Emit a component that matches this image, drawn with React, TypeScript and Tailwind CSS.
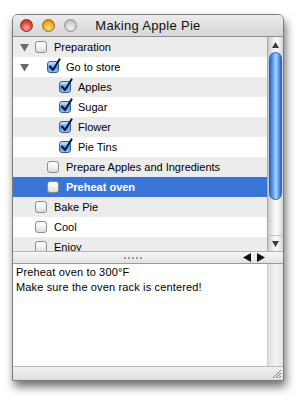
import React from 'react';

type Item = {
  label: string;
  level: number;
  checked?: boolean;
  open?: boolean;
  selected?: boolean;
};

const items: Item[] = [
  { label: 'Preparation', level: 0, open: true },
  { label: 'Go to store', level: 1, checked: true, open: true },
  { label: 'Apples', level: 2, checked: true },
  { label: 'Sugar', level: 2, checked: true },
  { label: 'Flower', level: 2, checked: true },
  { label: 'Pie Tins', level: 2, checked: true },
  { label: 'Prepare Apples and Ingredients', level: 1 },
  { label: 'Preheat oven', level: 1, selected: true },
  { label: 'Bake Pie', level: 0 },
  { label: 'Cool', level: 0 },
  { label: 'Enjoy', level: 0 },
];

const indent = ['pl-[22px]', 'pl-[34px]', 'pl-[46px]'];

function Checkbox({ checked }: { checked?: boolean }) {
  if (checked) {
    return (
      <span className="relative block w-[12px] h-[12px] shrink-0">
        <span className="absolute inset-0 rounded-[3px] border border-[#2f5ea8] bg-[linear-gradient(#cfe3fb,#5d9cec_55%,#8cc2fa)]" />
        <svg className="absolute -top-[3px] left-[1px]" width="13" height="14" viewBox="0 0 13 14">
          <path d="M2 8.5 L5 12 L11.5 1.5" fill="none" stroke="#101a3a" strokeWidth="2.2" strokeLinecap="round" strokeLinejoin="round" />
        </svg>
      </span>
    );
  }
  return (
    <span className="block w-[12px] h-[12px] shrink-0 rounded-[3px] border border-[#8c8c8c] bg-[linear-gradient(#ffffff,#f2f2f2_50%,#dcdcdc)] shadow-[inset_0_1px_0_#fff]" />
  );
}

function Disclosure() {
  return (
    <svg className="absolute left-[7px] top-[7px]" width="9" height="8" viewBox="0 0 9 8">
      <path d="M0 0 H9 L4.5 7.5 Z" fill="#6a6a6a" />
    </svg>
  );
}

function Light({ color }: { color: 'red' | 'yellow' | 'gray' }) {
  const cls = {
    red: 'bg-[radial-gradient(circle_at_50%_70%,#ffb0a0,#e0463c_55%,#a8231c)] border-[#8d2a24]',
    yellow: 'bg-[radial-gradient(circle_at_50%_70%,#ffe38a,#f2a91c_55%,#b8700e)] border-[#9a6a1c]',
    gray: 'bg-[radial-gradient(circle_at_50%_70%,#f4f4f4,#d0d0d0_55%,#a8a8a8)] border-[#8f8f8f]',
  }[color];
  return <span className={`block w-[13px] h-[13px] rounded-full border ${cls}`} />;
}

function VScroll() {
  return (
    <div className="w-[16px] shrink-0 flex flex-col border-l border-[#a8a8a8] bg-[linear-gradient(90deg,#c9c9c9,#f3f3f3_40%,#fafafa_60%,#d6d6d6)]">
      <div className="h-[15px] flex items-center justify-center">
        <svg width="7" height="6" viewBox="0 0 7 6"><path d="M3.5 0 L7 6 H0 Z" fill="#3c3c3c" /></svg>
      </div>
      <div className="mx-[1px] h-[148px] rounded-full border border-[#2a5fb0] bg-[linear-gradient(90deg,#2e6ad0,#74aef2_35%,#a8d4ff_55%,#5a98e8_80%,#2c66cc)]" />
      <div className="flex-1" />
      <div className="h-[16px] flex items-center justify-center border-t border-[#c4c4c4]">
        <svg width="7" height="6" viewBox="0 0 7 6"><path d="M0 0 H7 L3.5 6 Z" fill="#3c3c3c" /></svg>
      </div>
    </div>
  );
}

export default function App() {
  return (
    <div className="w-[300px] h-[400px] bg-white pt-[14px] pl-[12px] font-['Lucida_Grande','Liberation_Sans',Arial,sans-serif] text-black">
      <div className="w-[272px] h-[367px] flex flex-col rounded-t-[6px] border border-[#7d7d7d] bg-white shadow-[2px_6px_10px_rgba(0,0,0,0.55)] overflow-hidden">
        {/* title bar */}
        <div className="h-[22px] shrink-0 relative flex items-center border-b border-[#8e8e8e] bg-[linear-gradient(#ececec,#d6d6d6)]">
          <div className="flex gap-[9px] pl-[7px]">
            <Light color="red" />
            <Light color="yellow" />
            <Light color="gray" />
          </div>
          <div className="absolute inset-0 flex items-center justify-center text-[13px] tracking-[0.3px] text-[#111]">
            Making Apple Pie
          </div>
        </div>

        {/* outline */}
        <div className="h-[214px] shrink-0 flex">
          <div className="flex-1 overflow-hidden">
            {items.map((it, i) => (
              <div
                key={it.label}
                className={`relative h-[20px] flex items-center gap-[7px] text-[11px] ${indent[it.level]} ${
                  it.selected
                    ? 'bg-[#3875d7] text-white font-bold'
                    : i % 2 === 0
                    ? 'bg-[#ececec]'
                    : 'bg-white'
                }`}
              >
                {it.open && it.level === 0 && <Disclosure />}
                {it.open && it.level === 1 && <Disclosure />}
                <Checkbox checked={it.checked} />
                <span className="whitespace-nowrap">{it.label}</span>
              </div>
            ))}
          </div>
          <VScroll />
        </div>

        {/* splitter / horizontal bar */}
        <div className="h-[13px] shrink-0 flex items-center border-t border-[#b4b4b4] border-b border-b-[#9a9a9a] bg-[linear-gradient(#f6f6f6,#e2e2e2)]">
          <div className="flex-1 flex justify-center gap-[2px] pl-[10px]">
            {[0, 1, 2, 3, 4].map((d) => (
              <span key={d} className="block w-[2px] h-[2px] bg-[#9a9a9a]" />
            ))}
          </div>
          <div className="flex items-center gap-[6px] pr-[18px]">
            <svg width="8" height="9" viewBox="0 0 8 9"><path d="M0 4.5 L8 0 V9 Z" fill="#111" /></svg>
            <svg width="8" height="9" viewBox="0 0 8 9"><path d="M8 4.5 L0 0 V9 Z" fill="#111" /></svg>
          </div>
        </div>

        {/* notes */}
        <div className="flex-1 flex min-h-0">
          <div className="flex-1 pl-[3px] pt-[1px] text-[11px] leading-[15px] tracking-[0.15px]">
            <div>Preheat oven to 300°F</div>
            <div>Make sure the oven rack is centered!</div>
          </div>
          <div className="w-[16px] shrink-0 border-l border-[#cfcfcf] bg-[linear-gradient(90deg,#dedede,#f4f4f4_50%,#e4e4e4)]" />
        </div>

        {/* bottom bar */}
        <div className="h-[14px] shrink-0 relative border-t border-[#b8b8b8] bg-[linear-gradient(#f2f2f2,#dedede)]">
          <svg className="absolute right-[1px] bottom-[1px]" width="11" height="11" viewBox="0 0 11 11">
            <path d="M10 2 L2 10 M10 5 L5 10 M10 8 L8 10" stroke="#7a7a7a" strokeWidth="1" />
          </svg>
        </div>
      </div>
    </div>
  );
}
